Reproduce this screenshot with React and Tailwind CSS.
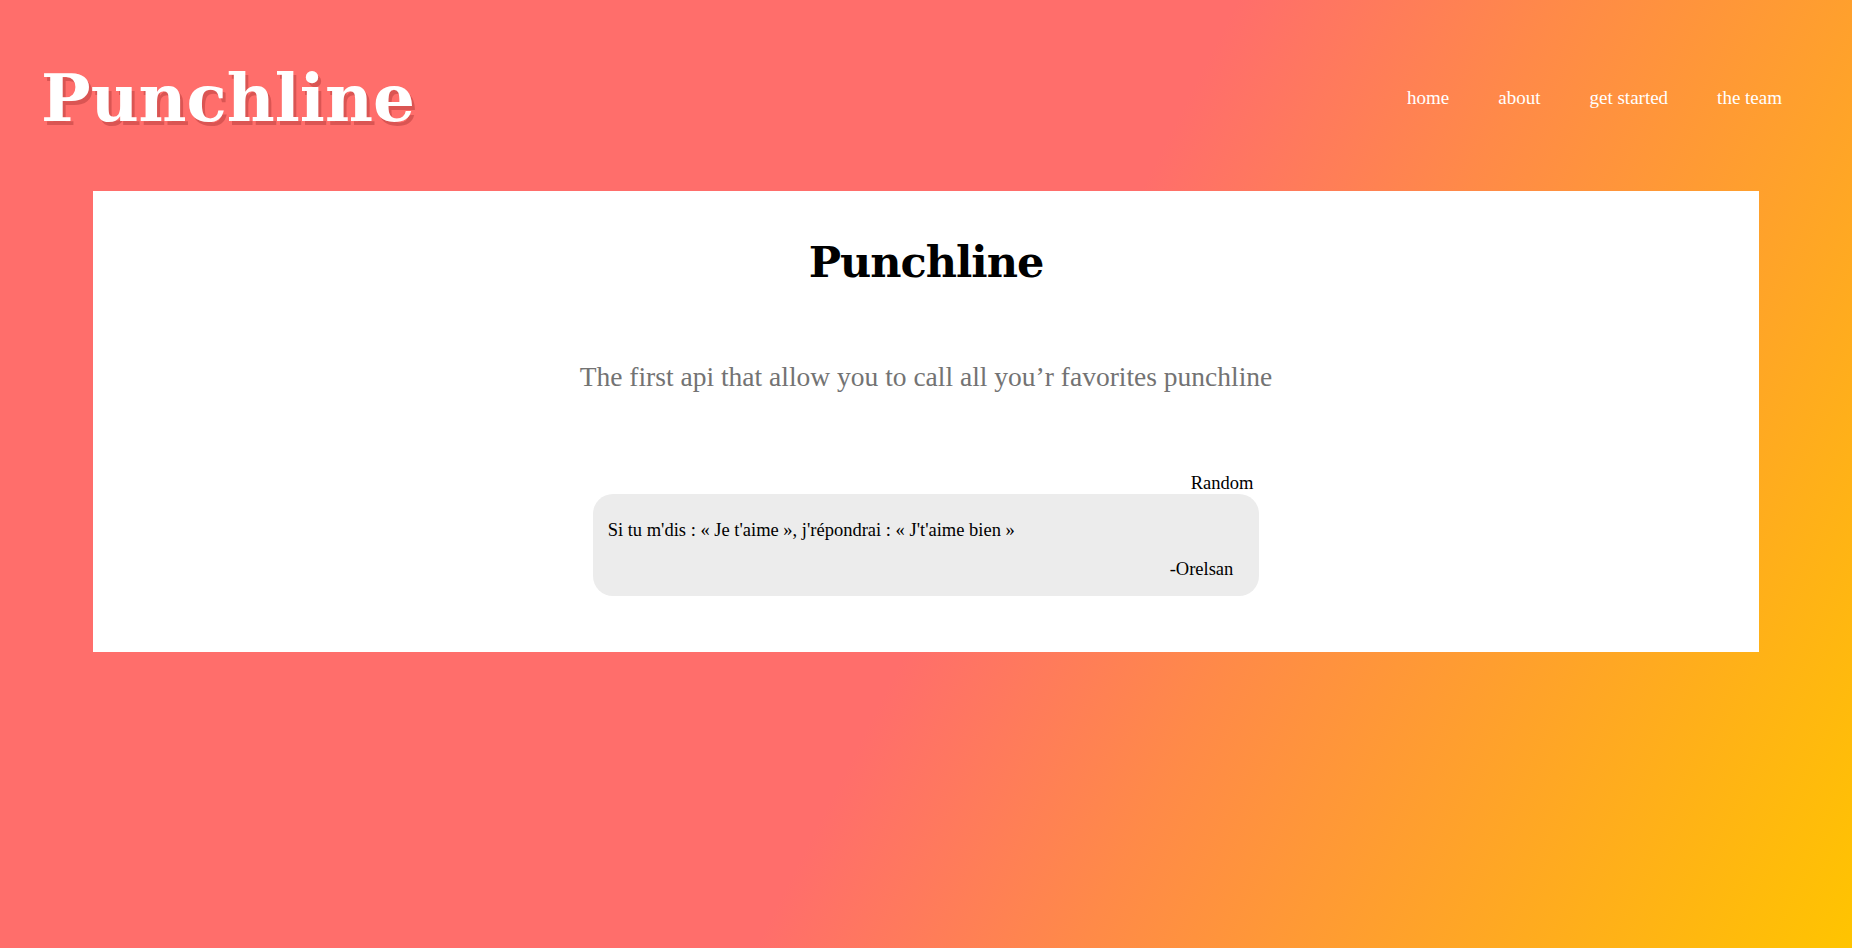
// Punchline landing — gradient page with header, nav and a white card holding a random quote
const navLinks = ["home", "about", "get started", "the team"];

function Header() {
  return (
    <header className="h-[191px] flex items-center justify-between pl-[41px] pr-[70px] pt-[4px]">
      <h1 className="text-white font-bold text-[66px] leading-none [font-family:'DejaVu_Serif',serif] [text-shadow:3px_4px_0_rgba(150,40,40,0.35)]">
        Punchline
      </h1>
      <nav className="flex items-center gap-[49px] text-white text-[19px] [font-family:'Liberation_Serif',serif]">
        {navLinks.map((link) => (
          <a key={link} href="#" className="leading-none">
            {link}
          </a>
        ))}
      </nav>
    </header>
  );
}

function QuoteBox() {
  return (
    <div className="w-[40%] mx-auto">
      <p className="text-right pr-[6px] text-[18.5px] leading-[22px] text-black">Random</p>
      <div className="bg-[#ececec] rounded-[20px] pl-[15px] pr-[26px] pt-[25px] pb-[16px] text-[18.5px] leading-[22px] text-black">
        <p>Si tu m'dis : « Je t'aime », j'répondrai : « J't'aime bien »</p>
        <p className="text-right mt-[17px]">-Orelsan</p>
      </div>
    </div>
  );
}

export default function App() {
  return (
    <div className="min-h-screen bg-[linear-gradient(117deg,#ff6e6b_53%,#ff8a48_67%,#ffc400_100%)] [font-family:'Liberation_Serif',serif]">
      <Header />

      {/* Main card */}
      <main className="w-[90%] mx-auto bg-white pt-[45px] pb-[56px]">
        <h2 className="text-center text-black font-bold text-[43px] leading-[52px] tracking-[-1px] [font-family:'DejaVu_Serif',serif]">
          Punchline
        </h2>
        <p className="text-center text-[#737373] text-[27.5px] leading-[32px] mt-[73px]">
          The first api that allow you to call all you’r favorites punchline
        </p>
        <div className="mt-[79px]">
          <QuoteBox />
        </div>
      </main>
    </div>
  );
}
